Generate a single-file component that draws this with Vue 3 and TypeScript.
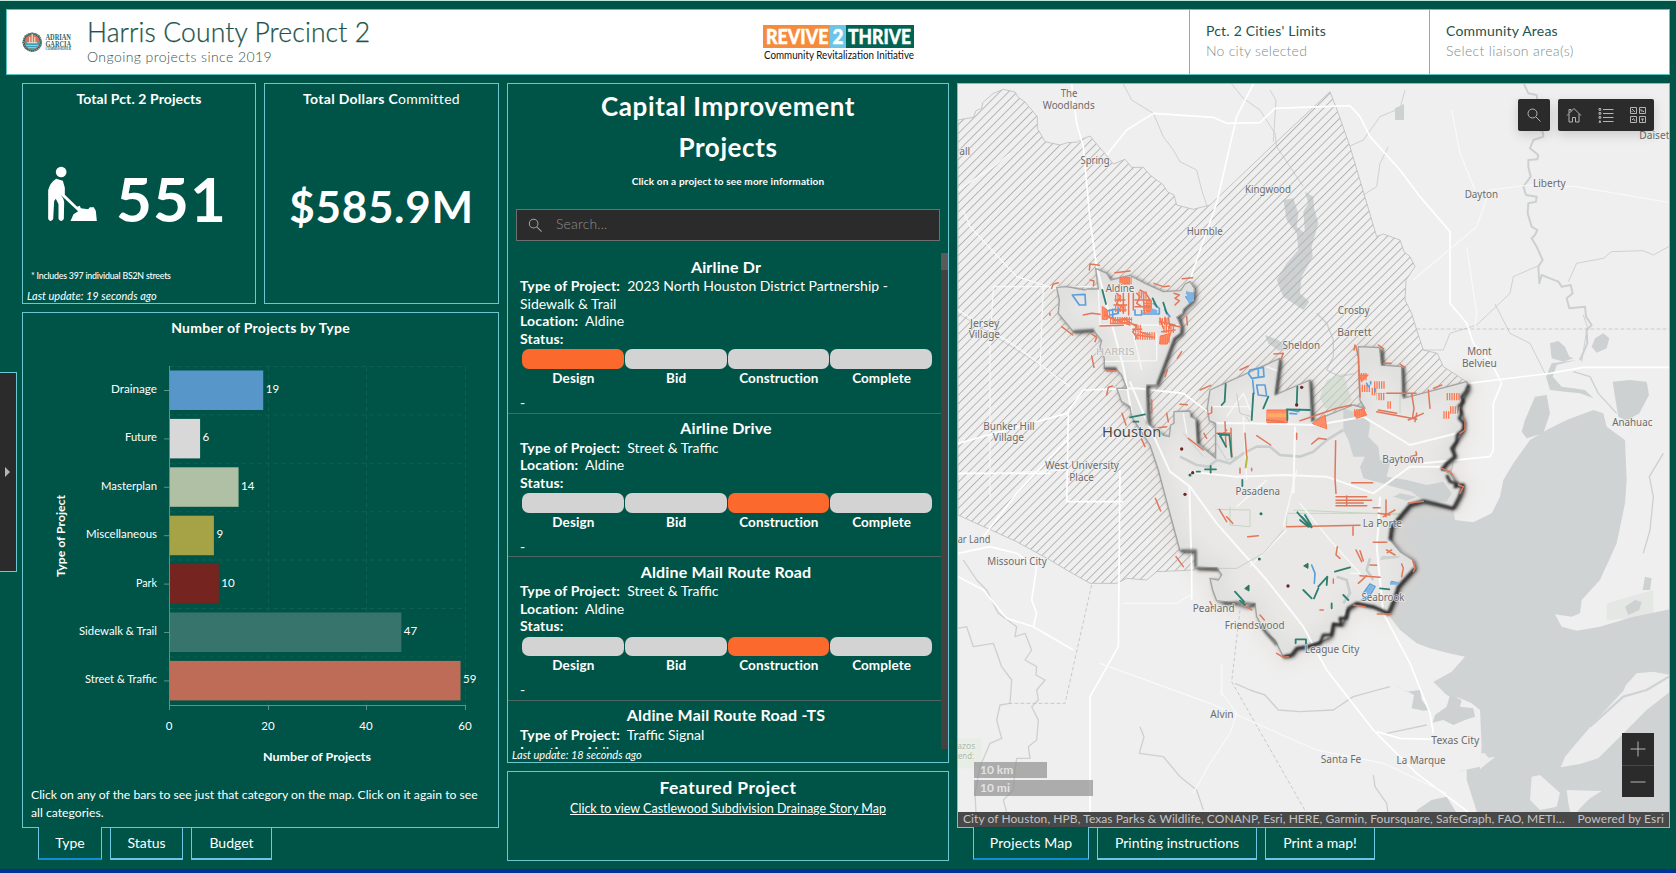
<script setup lang="ts">
interface Bar { name: string; value: number; color: string }
interface Project { name: string; type: string; stage: number }
interface Label { t: string; x: number; y: number; w: number; s?: number; c?: string }

const bars: Bar[] = [
  { name: 'Drainage', value: 19, color: '#5696c8' },
  { name: 'Future', value: 6.2, color: '#d8d8d8' },
  { name: 'Masterplan', value: 14, color: '#b0c0a4' },
  { name: 'Miscellaneous', value: 9, color: '#a5a346' },
  { name: 'Park', value: 10, color: '#762420' },
  { name: 'Sidewalk & Trail', value: 47, color: '#37756c' },
  { name: 'Street & Traffic', value: 59, color: '#be6b57' },
]
const nameWidths = [46, 32, 56, 71, 21, 78, 72]
const barTop = (i: number) => 369.5 + i * 48.4
const barWidth = (v: number) => v * 4.933

const stages = ['Design', 'Bid', 'Construction', 'Complete']
const projects: Project[] = [
  { name: 'Airline Dr', type: '2023 North Houston District Partnership - Sidewalk & Trail', stage: 0 },
  { name: 'Airline Drive', type: 'Street & Traffic', stage: 2 },
  { name: 'Aldine Mail Route Road', type: 'Street & Traffic', stage: 2 },
  { name: 'Aldine Mail Route Road -TS', type: 'Traffic Signal', stage: 2 },
]

// Map geometry is written in thirds of a pixel.
const county =
  'M24,120 70,112 78,92 95,85 98,68 130,40 160,28 195,36 205,52 225,66 262,110 262,145 285,185 330,195 352,188 382,186 395,178 420,168 440,192 460,215 490,252 525,238 545,262 580,262 600,285 640,315 652,335 672,345 680,375 730,388 780,375 980,185 1140,35 1165,100 1200,200 1280,470 1300,462 1350,480 1362,515 1380,530 1395,560 1368,600 1365,660 1385,700 1400,750 1420,810 1462,820 1480,860 1550,905 1500,1200 800,1300 735,1470 620,1475 590,1500 530,1495 500,1510 420,1510 350,1470 300,1440 200,1385 24,1305Z'
const precinct =
  'M320,622 350,620 405,630 412,627 445,627 437,565 470,580 482,600 540,586 585,610 640,635 692,632 705,612 720,605 733,625 730,660 700,688 697,700 680,712 696,740 690,760 672,775 620,915 590,915 590,940 597,1035 640,1066 658,1070 662,1035 672,1030 672,995 720,993 722,1010 738,1018 742,1090 797,1135 797,1030 778,1022 772,985 780,930 990,835 975,945 1080,900 1085,1025 1210,975 1245,985 1230,960 1225,800 1288,803 1295,855 1355,860 1360,955 1550,905 1556,925 1535,960 1528,990 1540,1020 1540,1050 1520,1080 1505,1105 1515,1130 1490,1150 1475,1170 1500,1180 1515,1205 1540,1215 1535,1240 1510,1285 1420,1265 1380,1275 1350,1310 1325,1340 1320,1380 1350,1415 1388,1440 1395,1465 1345,1520 1330,1565 1315,1600 1270,1580 1220,1570 1190,1590 1175,1635 1150,1630 1140,1670 1070,1700 1040,1705 1025,1725 1000,1730 975,1680 945,1655 920,1610 915,1570 890,1580 850,1568 800,1562 788,1530 780,1495 805,1500 815,1485 800,1463 735,1465 735,1415 690,1412 665,1320 625,1170 600,1095 545,1010 540,980 515,965 500,925 530,925 515,885 498,865 463,865 463,835 450,800 455,782 430,750 370,755 325,700 328,660Z'
const coast =
  'M1556,915 1548,935 1535,950 1540,965 1526,980 1535,1000 1528,1015 1542,1030 1540,1050 1522,1065 1520,1085 1505,1105 1515,1130 1490,1150 1475,1170 M1490,1185 1500,1205 1520,1210 1515,1220 1540,1215 1528,1250 1510,1285 1460,1272 1420,1263 1380,1275 1350,1310 1325,1340 1320,1380 M1395,1465 1345,1520 1330,1565 1315,1600 1270,1580 1220,1570 1195,1585 1190,1615 1170,1615 1175,1635 1150,1632 1145,1665 1120,1665 1110,1690 1070,1700 1040,1705 1025,1725 1000,1730'
const bay =
  'M1660,1200 1690,1150 1740,1080 1790,1050 1850,1020 1930,990 1960,1000 1970,1040 2025,1080 2030,1200 2025,1270 2000,1390 1950,1500 1895,1560 1890,1600 1865,1610 1815,1603 1835,1640 1880,1652 1950,1640 2050,1610 2160,1588 V2245 H1570 L1582,2200 1550,2100 1550,2070 1520,2075 1590,2060 1595,2000 1590,1890 1565,1870 1520,1850 1530,1862 1490,1845 1450,1805 1470,1795 1505,1775 1545,1730 1490,1718 1440,1705 1400,1690 1350,1650 1320,1610 1320,1560 1345,1520 1395,1460 1380,1430 1320,1380 1325,1340 1350,1310 1380,1275 1420,1265 1510,1285 1515,1320 1570,1327 1625,1300 1650,1250Z'
const ponds = [
  'M1000,360 1030,355 1045,400 1040,440 1065,460 1060,395 1075,370 1065,335 1090,350 1092,385 1105,430 1085,500 1088,530 1055,590 1050,640 1078,665 1060,690 1000,650 980,600 1010,550 1045,510 1040,460 1010,420Z',
  'M945,765 985,780 1018,810 985,812 955,790Z',
  'M1335,85 1350,78 1362,72V120H1335Z',
  'M1800,790 1825,783 1845,800 1858,830 1870,835 1840,845 1805,835Z',
  'M1935,775 1960,760 1978,775 1970,805 1940,818 1925,800Z',
  'M1988,905 2040,900 2090,905 2097,945 2068,1000 2030,1022 2005,1010 1995,950Z',
  'M1755,950 1790,945 1800,1000 1780,1060 1730,1075 1715,1055 1725,1020Z',
  'M1880,840 1820,855 1808,890 1835,920 1870,925 1905,930 1930,955 1890,940 1845,935 1800,930 1788,890 1805,850Z',
  'M2085,1490 2105,1495 2100,1530 2078,1530Z',
  'M2025,1580 2055,1560 2075,1565 2068,1590 2035,1605Z',
  'M1325,1810 1355,1825 1370,1835 1410,1830 1415,1860 1438,1890 1420,1892 1385,1885 1392,1845Z',
  'M1455,1905 1490,1880 1500,1845 1535,1860 1530,1880 1570,1885 1575,1910 1545,1920 1510,1935 1480,1920 1448,1928Z',
  'M1400,2190 1445,2160 1490,2150 1520,2200 1510,2240 1400,2240Z',
]
const innerWater = [
  'M1180,985 1240,1005 1260,1030 1255,1070 1285,1100 1290,1140 1320,1150 1310,1190 1370,1200 1430,1215 1480,1205 1505,1240 1490,1265 1420,1262 1385,1235 1330,1220 1290,1208 1240,1195 1230,1160 1245,1130 1210,1130 1195,1080 1180,1050Z',
  'M1330,1250 1350,1240 1400,1250 1372,1262Z',
  'M1290,1440 1295,1428 1350,1428 1345,1434 1310,1438Z',
]
const bayou =
  'M690,1130 L740,1155 775,1160 800,1140 840,1150 880,1120 920,1100 960,1100 990,1125 1050,1130 1090,1115 1130,1080 1180,1050 M1160,1490 1190,1500 1200,1540 1180,1570 M1260,1435 1250,1470 1270,1500'

const islands = [
  'M2160,1785 2110,1775 2060,1780 2028,1815 2020,1832 1930,1930 1845,2030 1832,2062 1890,2052 1945,2035 2010,1970 2090,1890 2160,1835Z',
  'M1745,2090 1770,2085 1830,2138 1820,2180 1770,2190 1740,2160Z',
  'M1850,2130 1955,2133 1920,2155 1890,2185 1865,2215 1855,2170Z',
  'M1590,2020 1605,2020 1615,2033 1636,2030 1605,2055 1590,2068Z',
]
const rivers = [
  'M1722,12 1735,40 1760,45 1762,62 1745,75 1748,95 1770,105 1768,125 1750,140 1778,155 1780,170 1750,180 1740,205 1765,225 1762,238 1735,240 1735,260 1742,290 1720,320 1728,345 1760,350 1758,365 1735,370 1733,400 1745,440 1762,450 1755,465 1745,475 1760,500 1778,540 1765,560 1768,610 1775,585 1800,595 1825,605 1835,620 1862,615 1868,640 1850,655 1858,685 1905,680 1908,710 1925,735 1910,750 1912,790 1890,840',
  'M1870,875 1920,890 1945,940 2000,1000',
  'M24,1645 50,1640 70,1700 130,1690 155,1760 185,1800 180,1870 150,1875 140,1920 155,1975 120,1990 90,2060 75,2140 80,2240',
  'M40,1440 80,1500 110,1530 145,1600 200,1640 195,1670 225,1660 245,1710 225,1740 260,1760 258,1785 285,1800 260,1830 265,1860 245,1880 265,1920 260,1980 235,2000 240,2035 200,2035 195,2070 190,2130 160,2160 180,2235',
  'M570,1940 582,1970 568,2020 640,2030 690,2090 740,2130 760,2190',
  'M855,1810 900,1830 945,1845 985,1890 1050,1895 1150,1890 1210,1850 1320,1820',
  'M2080,1420 2100,1350 2110,1250 2098,1190 2140,1120',
  'M1100,700 1130,730 1150,780 1150,830 1130,870 1170,890 1215,880',
  'M1310,1960 1430,1935 M1270,2085 1275,2120 1310,2170 1320,2240',
]
const creeks =
  'M520,12 545,60 610,100 640,170 670,210 690,245 740,270 755,330 770,375 M845,12 880,55 930,90 975,160 980,200 1060,320 M960,30 978,60 970,185 M1365,30 1350,85 1290,110 1240,180 1200,198 M1315,200 1290,250 1280,320 1240,345 M1770,555 1690,590 1680,640 1580,735 1500,760 1480,810 1420,810 M1635,672 1680,760 1740,790 1785,880 M1855,605 1880,550 1960,535 1985,515 2080,512 2110,525 2160,498 M1900,705 1912,740 1895,845 M24,700 200,810 340,900'
const roads = [
  'M365,12 380,130 400,200 420,420 440,560 520,860 545,1000',
  'M910,12 860,110 800,370 750,510 720,600',
  'M470,225 530,150 610,100 790,112 830,130 930,128 975,85 1200,77 1230,110 1260,170 1350,270 1410,350 1500,455 1500,670 1550,730 1570,790 1625,850 1655,910 1630,970 1630,1110 1620,1130 1420,1150',
  'M24,1180 H300 M24,1090 350,1000 400,930 560,925 700,940 780,1000',
  'M540,905 580,1000 660,1175 720,1220 800,1330 950,1500 1060,1640 1130,1770 1270,1950 1400,2080 1560,2200',
  'M1300,1600 1380,1750 1440,1900 1450,1960 M1280,1955 1350,1975 1450,1978',
  'M780,1030 900,1030 1100,1035 1240,1010 1380,1095 1520,1060 M1555,910 1800,880 1900,862 2160,862 M720,1175 860,1190 1000,1185 1130,1190 1270,1240 1380,1160 1470,1160',
  'M718,1220 725,1470 725,1560 M510,1170 505,1700 420,1850 420,2240 M350,1265 H520 M24,1420 120,1400 200,1420 260,1460 245,1560 260,1600 250,1640 M24,1490 100,1530 170,1615 250,1640 370,1710 M100,1370 200,1240 350,1080 M350,1265 355,1000 M1030,1240 1035,1040 M1290,1250 1285,1340 1280,1400 1300,1600',
]
const minorRoads =
  'M140,1180 350,1170 M120,1250 120,800 130,620 M130,620 540,620 M180,220 130,260 24,330 M40,390 60,440 200,590 360,640 M280,620 270,870 M24,690 200,800 360,920 M520,1570 680,1570 730,1540 M815,1750 V1850 M810,1830 860,1900 840,1960 780,2050 730,2140 M450,1750 780,1870 1100,2010 1300,2050 1490,2140 M1390,600 1580,440 1620,330 1740,315 1880,320 2160,368 M1505,90 1530,220 1575,330 M1550,500 1580,700 1575,740'
const thinRoads =
  'M445,627 450,735 700,735 M450,845 620,842 620,760 M545,740 575,870 M700,1000 710,1060 M830,1010 880,940 900,990 M880,1010 890,1200 M950,860 1000,880 990,835 M780,980 900,980 M1000,1340 1040,1170 M1050,1270 1140,1380 1230,1480 1200,1480 M900,1460 1010,1350 M860,1280 950,1200'

const orange = [
  'M418,570 420,552 448,556 M495,578 540,573 M612,610 640,620 658,618 M697,596 728,593 M305,625 310,612 325,608 M420,600 432,603 430,618 M300,700V706 M335,740 368,765 M425,762 440,772 435,785 M425,828 432,862 M470,873 498,872 M470,945 475,922 488,918 M516,1000 528,1035 M605,960V1000 M650,1000 655,1025 M690,973 712,974 M625,1043 650,1040 M575,1078 585,1100 M695,815 682,835 M652,870 645,890 M710,710 712,735 M750,930 782,916 M870,870 895,858 M972,822 1000,820 993,838 M762,1060 770,1075 M785,980 785,998 775,1003',
  'M400,705 425,700 450,703 M450,738 520,736 M465,705 500,720 530,715 M485,730 540,728 M475,712 540,735 M490,722 545,718',
  'M500,640 512,650 500,670 514,680 502,700 M520,640V700 M536,640V705 M550,640V690 M560,640 570,650 560,670 575,680 M570,630 588,640 600,660 M580,640 583,700 M555,660H600 M555,680H600 M495,660H525 M492,675H530 M498,690H528 M530,722 560,740 548,755 562,775 M545,732 560,735 M548,748H575 M560,765 610,772 M570,755 600,765 M630,715 640,745 M645,712 650,740 M655,712 660,745 M660,735 690,740 M628,725 675,735 M635,755 675,750',
  'M672,640 688,645 675,655 688,662 675,675 M715,1075 760,1110',
  'M800,1060 840,1060 M810,1070 830,1050 M825,1025 828,1100 M843,1045 845,1130 M885,1060 890,1130 M870,1165V1180 M905,1165V1172 M920,1067 962,1095 M1040,1060V1078 M1085,1092 1105,1075 1128,1078',
  'M950,1020 1000,1025 M1050,1022 1160,985 1205,975',
  'M1215,795 1212,810 M1218,800 1225,830 1230,950 M1285,795 1300,806 M1300,850H1323 M1350,852 1365,863 M1310,940H1398 M1280,995 1400,1018 M1285,990 1340,1000 M1450,925 1475,915 M1435,930 1440,985 M1385,940 1392,985 1388,1010 M1375,1020 1420,1000 M1395,1025 1400,1000',
  'M1157,1082 1155,1195 1158,1240 M1205,1208H1268 M1158,1250H1250 M1158,1261H1265 M1158,1269H1240 M1158,1277H1250 M1190,1248V1278 M1270,1283H1290 M1308,1260V1310 M1285,1300 1320,1305 M1300,1310 1335,1290 M1010,1340 1230,1336 M1209,1340V1366 M1270,1387H1310 M1162,1400 1158,1425 1170,1435 M1218,1410 1235,1445 M1230,1412 1240,1442 M1310,1410 1335,1425 M1325,1410 1312,1418 M1260,1455 1280,1456 M1230,1487 1290,1492 M1225,1510 1250,1487 M1355,1452 1360,1465 1355,1490 M1150,1497V1510 M1110,1590H1120 M1380,1130 1400,1125 1398,1115',
  'M808,1288 830,1325 M830,1310 848,1330 M893,1370 925,1367 M616,1255 632,1293 M678,1430 700,1460 M780,1565 790,1585 M930,1605 943,1620 M980,1720 1000,1732 1015,1730 M890,1580 905,1590 M1282,1602H1325 M1210,1575 1245,1580 M1475,1165 1500,1175 1508,1185 M1525,1215 1540,1220 1530,1240 M1388,1440 1395,1465 1390,1475 M1375,1270 1420,1264 M1545,1020 1545,1050 1530,1060',
]
const clusters = [
  'M508,602H545', 'M462,700H480', 'M480,722H545', 'M495,655H515', 'M495,685H530', 'M565,645H590', 'M590,668V698', 'M555,768H615', 'M555,745H575', 'M628,725H655', 'M640,748H672', 'M630,778H660',
  'M1232,890H1250', 'M1235,925H1262', 'M1272,915H1305', 'M1285,950H1305', 'M1265,935H1280', 'M1490,950H1530', 'M1500,990H1530', 'M1480,1005H1500', 'M1312,975H1325', 'M1212,998H1245',
]
const blue = [
  'M367,645 405,643 407,675 388,675Z',
  'M475,692 495,688 M480,705 505,700 M488,688V712 M505,685V700 M555,690V705H575V692 M580,702H628V685L610,670 M645,690 660,710 650,700 M710,640 730,640 720,668 708,650',
  'M895,880 900,870 940,862 942,890 905,895Z M920,915H945L950,948 925,945Z M908,900 912,940 M1020,990 1045,995 1050,988 M1020,1000 1040,1002 M925,870V890',
  'M1085,1455 1095,1480 1093,1510 M1240,1540 1260,1512 1275,1520 1260,1545 1235,1560 M1325,1505 1345,1510 M1250,910 1255,920 M1275,925V935 M1262,905V912',
]
const green = [
  'M457,630 468,672 M608,655 620,680 M640,668 650,700 M540,1012 585,1003 M550,1025H565 M827,912 824,965 815,975 M910,940 905,1020 M940,985 955,950 M1042,920 1040,975 M1010,988 1080,990 M1012,1020V990',
  'M805,1062 838,1065 M838,1065 845,1130 M808,1062 828,1100 M765,1168H798 M782,1158V1178 M740,1175H750 M877,1200V1218 M1042,1297 1062,1320 1080,1340 M1055,1310 1085,1342 M1065,1305 1083,1335 M1050,1320 1075,1340 M855,1535 882,1565 M870,1562 885,1575 M1060,1530 1085,1555 M1092,1555 1105,1525 M1105,1520 1132,1490 1130,1515 M1037,1690V1678H1068V1695 M1155,1475 1200,1462 M1290,1525 1318,1528 M1180,1545 1195,1560 M1145,1585V1570',
]
const dots = [[695, 1107], [728, 1178], [705, 1243], [1014, 1518], [1055, 922], [1040, 975]]
const greenDots = [[933, 1301], [928, 1437], [720, 1185]]

const labels: Label[] = [
  { t: 'The', x: 357, y: 50, w: 50 }, { t: 'Woodlands', x: 356, y: 86, w: 156 }, { t: 'all', x: 44, y: 224, w: 33 },
  { t: 'Spring', x: 435, y: 252, w: 87 }, { t: 'Kingwood', x: 954, y: 338, w: 138 }, { t: 'Humble', x: 764, y: 465, w: 108 },
  { t: 'Aldine', x: 510, y: 637, w: 86 }, { t: 'Jersey', x: 104, y: 740, w: 88 }, { t: 'Village', x: 103, y: 775, w: 94 },
  { t: 'Sheldon', x: 1054, y: 807, w: 113 }, { t: 'HARRIS', x: 496, y: 824, w: 116, s: 25, c: '#b9b9b9' },
  { t: 'Bunker Hill', x: 177, y: 1049, w: 154 }, { t: 'Village', x: 175, y: 1084, w: 94 },
  { t: 'Houston', x: 545, y: 1072, w: 178, s: 43, c: '#4a4a4a' },
  { t: 'West University', x: 396, y: 1166, w: 222 }, { t: 'Place', x: 395, y: 1202, w: 74 },
  { t: 'Daiset', x: 2113, y: 177, w: 90 }, { t: 'Dayton', x: 1594, y: 353, w: 100 }, { t: 'Liberty', x: 1798, y: 322, w: 98 },
  { t: 'Crosby', x: 1211, y: 702, w: 95 }, { t: 'Barrett', x: 1213, y: 769, w: 103 }, { t: 'Mont', x: 1588, y: 825, w: 73 },
  { t: 'Belvieu', x: 1588, y: 861, w: 104 }, { t: 'Anahuac', x: 2047, y: 1038, w: 120 }, { t: 'Baytown', x: 1359, y: 1150, w: 124 },
  { t: 'Pasadena', x: 923, y: 1244, w: 133 }, { t: 'ar Land', x: 72, y: 1390, w: 98 }, { t: 'Missouri City', x: 201, y: 1455, w: 178 },
  { t: 'Pearland', x: 791, y: 1596, w: 125 }, { t: 'Friendswood', x: 914, y: 1648, w: 179 }, { t: 'League City', x: 1146, y: 1718, w: 164 },
  { t: 'La Porte', x: 1297, y: 1340, w: 118 }, { t: 'Seabrook', x: 1299, y: 1562, w: 129 }, { t: 'Alvin', x: 816, y: 1915, w: 70 },
  { t: 'Texas City', x: 1516, y: 1993, w: 144 }, { t: 'Santa Fe', x: 1173, y: 2050, w: 121 }, { t: 'La Marque', x: 1413, y: 2053, w: 147 },
  { t: 'azos', x: 49, y: 2006, w: 54, s: 24, c: '#a9b7a9' }, { t: 'end:', x: 48, y: 2036, w: 48, s: 24, c: '#a9b7a9' },
]
</script>

<template>
  <div class="dash">
    <header class="top">
      <div class="brand">
        <svg class="seal" viewBox="0 0 49 20">
          <circle cx="10" cy="10" r="9.6" fill="#2f5f5e" />
          <circle cx="10" cy="10" r="7.6" fill="#d9725a" />
          <path d="M3,10H17L16,14 10,17.5 4,14Z" fill="#3aa0bd" />
          <path d="M10,2V10M7.5,5V10M12.5,5V10M5,10.5H15" stroke="#efe4cf" stroke-width="1.1" />
          <path d="M4,13.2H16M6,15.3H14" stroke="#b9e2e6" stroke-width=".7" />
          <circle cx="10" cy="10" r="8.7" fill="none" stroke="#8fc0b5" stroke-width="1" stroke-dasharray="1 1.1" />
          <g font-family="Liberation Serif, serif" font-weight="700" fill="#2f6469">
            <text x="23" y="8" font-size="7.4" textLength="25" lengthAdjust="spacingAndGlyphs">ADRIAN</text>
            <text x="23" y="14.3" font-size="7.4" textLength="25" lengthAdjust="spacingAndGlyphs">GARCIA</text>
            <text x="23" y="18" font-size="3.4" textLength="25" lengthAdjust="spacingAndGlyphs">COMMISSIONER</text>
          </g>
        </svg>
        <div class="titles">
          <h1>Harris County Precinct 2</h1>
          <p>Ongoing projects since 2019</p>
        </div>
      </div>
      <svg class="revive" viewBox="0 0 152 36">
        <rect width="67" height="23" fill="#f68b3c" />
        <rect x="66.500" width="17" height="23" fill="#6cc5e8" />
        <rect x="83" width="68" height="23" fill="#006354" />
        <g font-family="Lato, sans-serif" font-weight="900" font-size="20" fill="#fff" stroke="#fff" stroke-width=".4">
          <text x="3" y="18.500" textLength="62.500" lengthAdjust="spacingAndGlyphs">REVIVE</text>
          <text x="69.500" y="18.500" textLength="11" lengthAdjust="spacingAndGlyphs">2</text>
          <text x="85" y="18.500" textLength="63" lengthAdjust="spacingAndGlyphs">THRIVE</text>
        </g>
        <text x="1" y="34" font-family="Lato, sans-serif" font-size="10.500" fill="#111" textLength="150" lengthAdjust="spacingAndGlyphs">Community Revitalization Initiative</text>
      </svg>
      <div class="selectors">
        <div class="selector"><b class="k1">Pct. 2 Cities' Limits</b><span class="v1">No city selected</span></div>
        <div class="selector"><b class="k2">Community Areas</b><span class="v2">Select liaison area(s)</span></div>
      </div>
    </header>

    <main class="body">
      <section class="left">
        <div class="cards">
          <div class="panel card">
            <h2>Total Pct. 2 Projects</h2>
            <div class="figure">
              <svg class="worker" viewBox="140 497 150 168" fill="#fff">
                <circle cx="181" cy="515" r="16" />
                <path d="M166,535Q147,547 142,570V656Q149,668 157,656L160,602 165,595 173,612V656Q181,668 189,656L190,606Q190,596 179,583L232,633 218,642 209,662H288L285,632 279,621H267L262,627 240,624 237,616 229,619 192,583 192,562 186,541Z" />
              </svg>
              <span class="n551">551</span>
            </div>
            <p class="note">* Includes 397 individual BS2N streets</p>
            <p class="updated">Last update: 19 seconds ago</p>
          </div>
          <div class="panel card">
            <h2 class="committed">Total Dollars C<span>ommitted</span></h2>
            <div class="money">$585.9M</div>
          </div>
        </div>

        <div class="panel chart">
          <h2 class="by-type">Number of Projects by Type</h2>
          <svg class="plot" viewBox="23 348 475 426">
            <g stroke="#126052" stroke-dasharray="4 4">
              <path v-for="i in 7" :key="i" :d="`M169.500,${365.500 + (i - 1) * 48.4}H465.500`" />
              <path d="M268.500,366V704M366.500,366V704M465.500,366V704" />
            </g>
            <g v-for="(b, i) in bars" :key="b.name">
              <path :d="`M164,${389.500 + i * 48.4}H169.500`" stroke="#5f9287" />
              <rect x="169.500" :y="barTop(i)" :width="barWidth(b.value)" height="39.500" :fill="b.color" />
              <text x="157" :y="392 + i * 48.4" text-anchor="end" :textLength="nameWidths[i]" lengthAdjust="spacingAndGlyphs">{{ b.name }}</text>
              <text :x="172 + barWidth(b.value)" :y="392 + i * 48.4" class="num">{{ Math.floor(b.value) }}</text>
            </g>
            <path d="M169.500,365V709M169,704.500H466M268.500,704V709M366.500,704V709M465.500,704V709" stroke="#5f9287" fill="none" />
            <g text-anchor="middle">
              <text x="169" y="729">0</text><text x="268" y="729">20</text><text x="366" y="729">40</text><text x="465" y="729">60</text>
            </g>
            <text class="axis" x="317" y="760" text-anchor="middle" textLength="108" lengthAdjust="spacingAndGlyphs">Number of Projects</text>
            <text class="axis" transform="translate(64.500 535) rotate(-90)" text-anchor="middle" textLength="82" lengthAdjust="spacingAndGlyphs">Type of Project</text>
          </svg>
          <p class="hint">Click on any of the bars to see just that category on the map. Click on it again to see all categories.</p>
        </div>
        <nav class="tabs">
          <a class="on t1">Type</a><a class="t2">Status</a><a class="t3">Budget</a>
        </nav>
      </section>

      <section class="middle">
        <div class="panel projects">
          <h3>Capital Improvement<br />Projects</h3>
          <p class="sub">Click on a project to see more information</p>
          <div class="search">
            <svg viewBox="0 0 16 16" fill="none" stroke="#a0a0a0" stroke-width="1.100"><circle cx="6" cy="6" r="4.600" /><path d="M9.400,9.400 14.500,14.500" /></svg>
            <span>Search...</span>
          </div>
          <div class="scroll">
            <div class="list">
              <article v-for="p in projects" :key="p.name">
                <h4>{{ p.name }}</h4>
                <p><b>Type of Project:</b>&nbsp; {{ p.type }}</p>
                <p><b>Location:</b>&nbsp; Aldine</p>
                <p><b>Status:</b></p>
                <div class="steps">
                  <div v-for="(s, i) in stages" :key="s" class="step"><i :class="{ hot: i === p.stage }"></i><b>{{ s }}</b></div>
                </div>
                <p class="dash-line">-</p>
              </article>
            </div>
            <div class="bar"><i></i></div>
          </div>
          <p class="updated">Last update: 18 seconds ago</p>
        </div>
        <div class="panel featured">
          <h3>Featured Project</h3>
          <a>Click to view Castlewood Subdivision Drainage Story Map</a>
        </div>
      </section>

      <section class="right">
        <div class="panel map">
          <svg class="canvas" viewBox="24 12 2133 2229" fill="none" stroke-linejoin="round">
            <defs>
              <pattern id="hatch" width="18.500" height="18.500" patternUnits="userSpaceOnUse" patternTransform="rotate(45)">
                <rect x="0" width="2.800" height="18.500" fill="#b2b3b1" />
              </pattern>
              <filter id="shade" x="-5%" y="-5%" width="112%" height="112%">
                <feDropShadow dx="7" dy="5" stdDeviation="6" flood-color="#000" flood-opacity=".7" />
              </filter>
              <filter id="haze" x="-10%" y="-10%" width="120%" height="120%"><feGaussianBlur stdDeviation="26" /></filter>
              <filter id="soft" x="-5%" y="-5%" width="110%" height="110%"><feGaussianBlur stdDeviation="3" /></filter>
              <clipPath id="inside"><path :d="precinct" /></clipPath>
            </defs>
            <rect x="24" y="12" width="2133" height="2229" fill="#efefef" />
            <rect x="24" y="1975" width="70" height="90" fill="#e8ede6" />
            <path d="M1970,1570 2110,1530V1610L1970,1620Z" fill="#e5e7e4" />
            <path :d="bay" fill="#cfd3d4" />
            <path v-for="d in ponds" :key="d" :d="d" fill="#cdd1d2" />
            <path v-for="d in islands" :key="d" :d="d" fill="#ededed" />
            <path d="M2157,1790 2090,1830 2020,1850 1920,1940" stroke="#cfd3d4" stroke-width="7" />
            <path v-for="(d, i) in rivers" :key="d" :d="d" stroke="#cdd0d1" :stroke-width="i ? 4 : 6" />
            <path :d="creeks" stroke="#cfd1d1" stroke-width="3" />
            <path :d="precinct" stroke="#ddd3ca" stroke-width="50" filter="url(#haze)" opacity=".4" />
            <path :d="county" fill="url(#hatch)" stroke="#bcbebd" stroke-width="2.500" />
            <path d="M1400,747H2160 M425,1515 345,1870H170 M870,1590 845,1805 1070,2200" stroke="#bfc2c1" stroke-width="2.500" stroke-dasharray="11 7" />
            <g stroke="#fff" stroke-width="5"><path v-for="d in roads" :key="d" :d="d" /></g>
            <path :d="minorRoads" stroke="#f9f9f9" stroke-width="3.500" />
            <path :d="precinct" fill="#e9e8e7" filter="url(#shade)" />
            <g clip-path="url(#inside)">
              <path :d="precinct" stroke="#dadbd9" stroke-width="44" filter="url(#haze)" opacity=".8" />
              <path v-for="d in innerWater" :key="d" :d="d" fill="#cdd1d2" />
              <path :d="bayou" stroke="#c9cdce" stroke-width="8" />
              <path d="M1100,900 1150,880 1170,960 1130,1010 M1030,1290 1350,1304 M1010,1340V1300H1350 M900,1030 890,1010 M1280,960V940H1350V1000 M840,1280 840,1335 900,1340 900,1290 800,1288" stroke="#c3d6bd" stroke-width="3" />
              <g stroke="#fbfbfb" stroke-width="6"><path v-for="d in roads" :key="d" :d="d" /></g>
              <path :d="thinRoads" stroke="#f8f8f8" stroke-width="4" />
              <path d="M860,940 870,1000 905,1010 M800,1090 830,1140 860,1130 M700,1060 760,1130 M740,1010 760,1060 M780,1465H860L940,1420 1000,1350" stroke="#c9cccb" stroke-width="3" />
            </g>
            <path :d="precinct" stroke="#a2a4a3" stroke-width="4" />
            <path d="M1110,950 1130,900 1180,880 1205,960 1170,990 1125,985Z" fill="#c5d3c3" opacity=".55" />
            <path :d="coast" stroke="#2c2c2c" stroke-width="9" filter="url(#soft)" />
            <path d="M370,754 432,750 M463,865H500 M594,920V1032 M622,914 674,777 697,762 692,714 M692,1412H737V1460 M740,1464 805,1470 M820,1572 860,1568 915,1574 M935,1640 980,1695 M742,1020 746,1090 M992,838 978,943 M1082,903 1088,1022 M1298,808V855 M1360,862V950" stroke="#4c4e4b" stroke-width="8" opacity=".75" filter="url(#soft)" />
            <g stroke-linecap="round">
              <path d="M952,990H1012V1028H952Z M1088,1030 1125,1005 1130,1045Z M1215,995 1240,985 1250,1005 1220,1015Z M1230,885 1255,885 1235,905Z M458,680 472,690V718H458Z M590,660H604V695H590Z M632,768 662,760 652,792H630Z M512,592H540V612H515Z" fill="#ff8d68" stroke="#fa7048" stroke-width="3" />
              <path d="M952,1000H1010V1012H952Z" fill="#ffab66" stroke="none" />
              <g stroke="#e0775a" stroke-width="4.500"><path v-for="d in orange" :key="d" :d="d" /></g>
            </g>
            <g stroke="#fa7b56" stroke-width="22" stroke-dasharray="4 3"><path v-for="d in clusters" :key="d" :d="d" /></g>
            <g stroke-linecap="round">
              <g stroke="#5d9fdb" stroke-width="5"><path v-for="d in blue" :key="d" :d="d" /></g>
              <path d="M708,632 730,640 732,662 715,668Z M605,685 622,690V703H598Z M1320,1505H1345V1514H1320Z M1245,1535 1262,1515 1270,1522 1255,1548Z" fill="#7db4e4" />
              <g stroke="#2f8070" stroke-width="5.500"><path v-for="d in green" :key="d" :d="d" /></g>
              <path d="M885,1525 897,1515V1532Z M1062,1457 1074,1450V1464Z" fill="#2b7465" stroke="#2b7465" stroke-width="3" />
              <path d="M887,1162 891,1132" stroke="#b5b83c" stroke-width="6" />
            </g>
            <circle v-for="d in dots" :key="d[0]" :cx="d[0]" :cy="d[1]" r="5" fill="#6f2524" />
            <circle v-for="d in greenDots" :key="d[0]" :cx="d[0]" :cy="d[1]" r="4.500" fill="#2b7465" />
            <g class="names" text-anchor="middle">
              <text v-for="l in labels" :key="l.t + l.y" :x="l.x" :y="l.y" :font-size="l.s || 30" :fill="l.c || '#6b6b6b'" :textLength="l.w" lengthAdjust="spacingAndGlyphs">{{ l.t }}</text>
            </g>
          </svg>
          <div class="tools">
            <div class="tool"><svg viewBox="0 0 16 16"><circle cx="6.500" cy="6.500" r="4.500" /><path d="M10,10 14.500,14.500" /></svg></div>
            <div class="tool group">
              <svg viewBox="0 0 16 16"><path d="M1,8.500 8,1.500 15,8.500M3,7V15H6.500V10.500H9.500V15H13V7M3,6V2.500H5V4.300" /></svg>
              <svg viewBox="0 0 16 16"><path d="M5,2.500H15.500M5,6.500H15.500M5,10.500H15.500M5,14.500H15.500M1,1.500H2.800V3.300H1ZM1,5.500H2.800V7.300H1ZM1,9.500H2.800V11.300H1ZM1,15.300 1.900,13.500 2.800,15.300Z" /></svg>
              <svg viewBox="0 0 16 16"><path d="M.500,.500H6.500V6.500H.500ZM9.500,.500H15.500V6.500H9.500ZM.500,9.500H6.500V15.500H.500ZM9.500,9.500H15.500V15.500H9.500ZM2,2 5,5M2,5V4M11,2V4H13.500V5M2,13 3.500,11.500 5,14M11,12H14M12.500,12V14.500" /></svg>
            </div>
          </div>
          <div class="zoom"><div><svg viewBox="0 0 16 16"><path d="M8,.500V15.500M.500,8H15.500" /></svg></div><div><svg viewBox="0 0 16 16"><path d="M.500,8H15.500" /></svg></div></div>
          <div class="scale"><div class="km">10 km</div><div class="mi">10 mi</div></div>
          <div class="credits"><span class="src">City of Houston, HPB, Texas Parks &amp; Wildlife, CONANP, Esri, HERE, Garmin, Foursquare, SafeGraph, FAO, METI…</span><span class="esri">Powered by Esri</span></div>
        </div>
        <nav class="tabs">
          <a class="on m1">Projects Map</a><a class="m2">Printing instructions</a><a class="m3">Print a map!</a>
        </nav>
      </section>
    </main>
    <aside class="drawer"><i></i></aside>
  </div>
</template>

<style>
body { margin: 0; overflow: hidden; }
</style>

<style scoped>
* { box-sizing: border-box; }
h1, h2, h3, h4, p { margin: 0; font-weight: 400; }
.dash { position: relative; width: 1676px; height: 873px; background: #005447; border-top: 1px solid #bfe8dc; border-bottom: 4px solid #00309a; font-family: Lato, "Open Sans", sans-serif; color: #fff; overflow: hidden; white-space: nowrap; }
.top { display: flex; align-items: stretch; margin: 8px 6px 0; height: 66px; background: #fff; border: 1px solid #5cc3c3; color: #1d544c; }
.brand { display: flex; width: 756px; padding-left: 15px; }
.seal { width: 50px; height: 20.400px; margin: 22px 15px 0 0; }
.titles h1 { margin-top: 5px; font-size: 26.500px; font-weight: 300; line-height: 34px; letter-spacing: .12px; -webkit-text-stroke: .25px; }
.titles p { font-size: 14px; font-weight: 300; line-height: 16px; letter-spacing: .42px; color: #35534e; }
.revive { width: 152px; height: 36px; margin-top: 15px; }
.selectors { display: flex; margin-left: auto; }
.selector { width: 240px; padding: 10.500px 0 0 16px; border-left: 1px solid #5cc3c3; display: flex; flex-direction: column; align-items: flex-start; }
.selector b { font-size: 14px; font-weight: 400; line-height: 19px; }
.selector span { font-size: 14px; font-weight: 300; line-height: 22px; color: #7a8f8b; }
.k1, .k2 { letter-spacing: .2px; }
.v1 { letter-spacing: .26px; }
.v2 { letter-spacing: .36px; }

.body { display: grid; grid-template-columns: 477px 442px 713px; gap: 8px; padding: 8px 0 0 22px; }
.panel { border: 1px solid #6ac8d0; background: #005447; }
.left, .right { display: flex; flex-direction: column; }
.cards { display: grid; grid-template-columns: 234px 235px; gap: 8px; height: 221px; margin-bottom: 8px; }
.card { display: flex; flex-direction: column; }
h2 { font-size: 14px; font-weight: 700; line-height: 18px; text-align: center; padding-top: 6px; letter-spacing: .1px; }
h2 span { font-weight: 400; }
.committed { letter-spacing: .3px; }
.by-type { letter-spacing: .26px; }
.figure { display: flex; padding: 57px 0 0 24px; height: 150px; }
.worker { width: 51px; height: 56px; margin-top: 1px; }
.n551 { margin-left: 18px; font-size: 62px; font-weight: 700; line-height: 66px; letter-spacing: 1px; }
.note { font-size: 8.800px; line-height: 12px; padding-left: 8px; margin-top: 12px; font-weight: 500; letter-spacing: -.22px; }
.updated { font-size: 11px; font-style: italic; line-height: 14px; padding-left: 4px; }
.card .updated { margin-top: auto; }
.money { text-align: center; font-size: 44px; font-weight: 700; line-height: 52px; margin-top: 72px; letter-spacing: .7px; }

.chart { height: 516px; display: flex; flex-direction: column; }
.plot { width: 475px; height: 426px; margin-top: 11.500px; font-size: 11.500px; fill: none; }
.plot text { fill: #fff; }
.plot .axis { font-weight: 700; font-size: 12px; }
.hint { white-space: normal; font-size: 12.200px; line-height: 18px; padding: 11px 8px 0; }
.tabs { display: flex; gap: 8px; padding-left: 16px; }
.tabs a { height: 32px; border: 1px solid #6ac8e0; border-bottom: 2px solid #6cc4ee; border-top: 0; font-size: 14px; line-height: 29px; text-align: center; }
.tabs .on { margin-top: -1px; height: 33px; padding-top: 1px; background: #005447; border-bottom-color: #0d8fd8; position: relative; }
.t1 { width: 64px; } .t2 { width: 73px; } .t3 { width: 81px; }
.m1 { width: 116px; letter-spacing: .15px; } .m2 { width: 160px; } .m3 { width: 110px; }

.middle { display: flex; flex-direction: column; gap: 8px; }
.projects { height: 680px; display: flex; flex-direction: column; }
.projects h3 { font-size: 26px; font-weight: 700; line-height: 41px; text-align: center; padding-top: 2px; letter-spacing: .62px; }
.sub { font-size: 10px; font-weight: 700; line-height: 14px; text-align: center; margin-top: 6px; letter-spacing: .15px; }
.search { display: flex; align-items: center; margin: 21px 8px 0; height: 32px; background: #2b2b2b; border: 1px solid #6e6e6e; font-size: 14px; line-height: 28px; font-weight: 300; color: #8f8f8f; letter-spacing: .15px; }
.search span { margin-top: -2px; }
.search svg { width: 15px; height: 15px; margin: 0 13px 0 11px; }
.scroll { display: flex; margin-top: 12px; height: 496px; overflow: hidden; }
.list { width: 433px; margin-top: -1px; }
article { height: 143.500px; padding: 4.500px 9px 0 12px; border-bottom: 1px solid #4f6660; }
article:first-child { height: 161.500px; }
h4 { font-size: 16px; font-weight: 700; line-height: 19px; height: 20.500px; text-align: center; letter-spacing: .16px; }
article p { font-size: 14px; line-height: 17.500px; white-space: normal; }
article p b { letter-spacing: .15px; }
.steps { display: grid; grid-template-columns: repeat(4, 1fr); padding: 2.200px 0 0 2px; width: 413px; }
.step { display: flex; flex-direction: column; }
.step i { height: 19.500px; border-radius: 7px; background: #d3d3d3; margin-right: 1px; }
.step .hot { background: #fb692d; }
.step b { font-size: 13.500px; line-height: 19px; text-align: center; letter-spacing: .1px; }
article .dash-line { margin-top: 6px; }
.bar { margin-left: auto; width: 7px; background: #424242; }
.bar i { display: block; height: 17px; background: #5a5a5a; }
.projects > .updated { padding-left: 4px; line-height: 12px; }
.featured { height: 90px; text-align: center; }
.featured h3 { font-size: 17.500px; font-weight: 700; line-height: 22px; margin-top: 5px; letter-spacing: .5px; }
.featured a { display: block; font-size: 12.500px; line-height: 19px; text-decoration: underline; }

.map { position: relative; height: 745px; overflow: hidden; }
.canvas { display: block; width: 711px; height: 743px; }
.names { font-family: "Noto Sans", "Open Sans", sans-serif; }
.names text { paint-order: stroke; stroke: #f2f2f2; stroke-opacity: .75; stroke-width: 5px; }
.tools { position: absolute; top: 15px; right: 15px; display: flex; gap: 8px; }
.tool { display: flex; align-items: center; justify-content: center; width: 32px; height: 32px; background: #2b2b2b; border-radius: 2px; box-shadow: 0 4px 12px rgba(0, 0, 0, .15); }
.group { width: 96px; gap: 16px; }
.tool svg, .zoom svg { width: 16px; height: 16px; fill: none; stroke: #b5b5b5; stroke-width: 1; }
.zoom { position: absolute; right: 15px; bottom: 30px; width: 32px; background: #2b2b2b; }
.zoom div { display: flex; align-items: center; justify-content: center; height: 32px; }
.zoom div + div { border-top: 1px solid #484848; }
.scale { position: absolute; left: 16px; bottom: 31px; font-size: 12px; font-weight: 700; color: #e2e2e2; line-height: 16px; }
.scale div { background: rgba(140, 140, 140, .68); padding-left: 6px; height: 16px; }
.km { width: 73px; margin-bottom: 2px; }
.mi { width: 119px; }
.credits { position: absolute; left: 0; right: 0; bottom: 0; height: 15px; display: flex; justify-content: space-between; padding: 0 5px; background: #484848; color: #c4c4c4; font-size: 12px; line-height: 14px; }
.src { letter-spacing: .07px; }
.esri { letter-spacing: .15px; }

.drawer { position: absolute; left: -1px; top: 371px; width: 18px; height: 200px; background: #2b2b2b; border: 1px solid #6ac8d0; }
.drawer i { position: absolute; left: 5px; top: 94px; border: 5px solid transparent; border-left-color: #b5b5b5; border-right: 0; }
</style>
